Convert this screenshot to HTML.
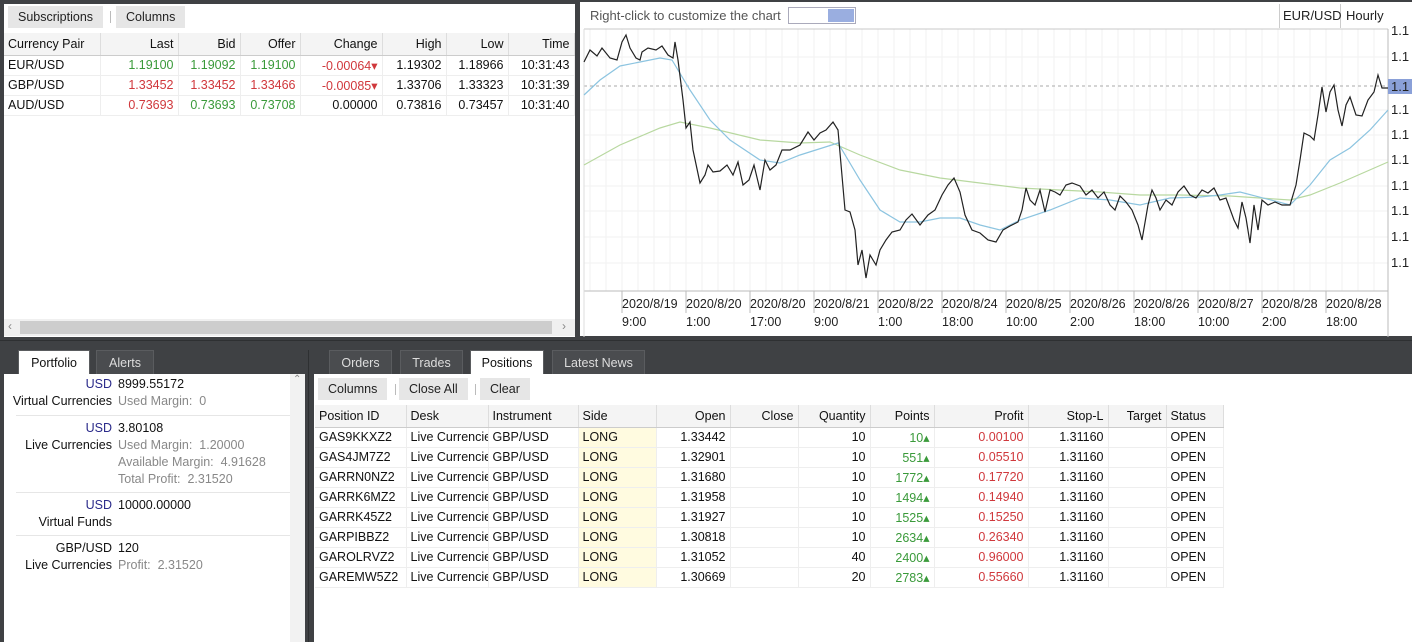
<!DOCTYPE html>
<html><head><meta charset="utf-8"><style>
*{margin:0;padding:0;box-sizing:border-box}
body{width:1412px;height:642px;background:#3f4144;font-family:"Liberation Sans","Noto Sans CJK SC",sans-serif;font-size:12.5px;color:#111;position:relative;overflow:hidden}
.a{position:absolute}
.btn{position:absolute;background:#e6e6e6;height:22px;line-height:22px;padding:0 10px;color:#222}
.tab{position:absolute;height:24px;line-height:24px;text-align:center;background:#4a4c4f;color:#ddd;border:1px solid #5a5c5f;border-bottom:none}
.tab.on{background:#fff;color:#111}
table{border-collapse:collapse;position:absolute;table-layout:fixed}
td{height:20px;padding:0 4px;white-space:nowrap;overflow:hidden;border-right:1px solid #eee;border-bottom:1px solid #eee}
th{height:22px;font-weight:normal;padding:0 4px;background:#f4f4f4;border-right:1px solid #ddd;border-bottom:1px solid #ccc;white-space:nowrap;overflow:hidden}
.r{text-align:right}.l{text-align:left}
.g{color:#3a9a3a}.rd{color:#d0383c}.gy{color:#888}.bl{color:#2a2a8a}
.side{background:#fffbe0}
.pl{position:absolute;right:178px;width:200px;text-align:right}
.pv{position:absolute;left:114px}
.pb{position:absolute;left:0;width:286px;line-height:17px}
.sep{position:absolute;left:12px;width:274px;height:1px;background:#e6e6e6}
</style></head><body>
<div class="a" style="left:4px;top:4px;width:571px;height:333px;background:#fff"></div>
<div class="btn" style="left:8px;top:6px">Subscriptions</div>
<div class="a" style="left:110px;top:11px;width:1px;height:12px;background:#bbb"></div>
<div class="btn" style="left:116px;top:6px">Columns</div>
<table style="left:4px;top:33px;width:570px">
<colgroup><col style="width:96px"><col style="width:78px"><col style="width:62px"><col style="width:60px"><col style="width:82px"><col style="width:64px"><col style="width:62px"><col style="width:66px"></colgroup>
<tr><th class="l">Currency Pair</th><th class="r">Last</th><th class="r">Bid</th><th class="r">Offer</th><th class="r">Change</th><th class="r">High</th><th class="r">Low</th><th class="r">Time</th></tr>
<tr><td>EUR/USD</td><td class="r g">1.19100</td><td class="r g">1.19092</td><td class="r g">1.19100</td><td class="r rd">-0.00064▾</td><td class="r">1.19302</td><td class="r">1.18966</td><td class="r">10:31:43</td></tr>
<tr><td>GBP/USD</td><td class="r rd">1.33452</td><td class="r rd">1.33452</td><td class="r rd">1.33466</td><td class="r rd">-0.00085▾</td><td class="r">1.33706</td><td class="r">1.33323</td><td class="r">10:31:39</td></tr>
<tr><td>AUD/USD</td><td class="r rd">0.73693</td><td class="r g">0.73693</td><td class="r g">0.73708</td><td class="r">0.00000</td><td class="r">0.73816</td><td class="r">0.73457</td><td class="r">10:31:40</td></tr>
</table>
<div class="a" style="left:4px;top:319px;width:571px;height:17px;background:#f0f0f0"></div>
<div class="a" style="left:20px;top:321px;width:532px;height:13px;background:#cdcdcd"></div>
<div class="a gy" style="left:8px;top:319px;font-size:12px">‹</div>
<div class="a gy" style="left:562px;top:319px;font-size:12px">›</div>
<div class="a" style="left:580px;top:2px;width:832px;height:334px;background:#fff"></div>
<div class="a" style="left:590px;top:8px;color:#555;font-size:13px">Right-click to customize the chart</div>
<div class="a" style="left:788px;top:7px;width:68px;height:17px;border:1px solid #aab"></div>
<div class="a" style="left:828px;top:9px;width:26px;height:13px;background:#9aaee0"></div>
<div class="a" style="left:1279px;top:4px;width:1px;height:24px;background:#ccc"></div>
<div class="a" style="left:1340px;top:4px;width:1px;height:24px;background:#ccc"></div>
<div class="a" style="left:1283px;top:8px;font-size:13px;color:#222">EUR/USD</div>
<div class="a" style="left:1346px;top:8px;font-size:13px;color:#222">Hourly</div>
<svg class="a" style="left:580px;top:0" width="832" height="337">
<g stroke="#f2f2f2" stroke-width="1">
<path d="M10 29V291M26 29V291M42 29V291M58 29V291M74 29V291M90 29V291M106 29V291M122 29V291M138 29V291M154 29V291M170 29V291M186 29V291M202 29V291M218 29V291M234 29V291M250 29V291M266 29V291M282 29V291M298 29V291M314 29V291M330 29V291M346 29V291M362 29V291M378 29V291M394 29V291M410 29V291M426 29V291M442 29V291M458 29V291M474 29V291M490 29V291M506 29V291M522 29V291M538 29V291M554 29V291M570 29V291M586 29V291M602 29V291M618 29V291M634 29V291M650 29V291M666 29V291M682 29V291M698 29V291M714 29V291M730 29V291M746 29V291M762 29V291M778 29V291M794 29V291"/>
<path d="M4 57H808M4 110H808M4 135H808M4 160H808M4 186H808M4 211H808M4 237H808M4 263H808"/>
</g>
<line x1="4" y1="29" x2="808" y2="29" stroke="#c8c8c8"/>
<line x1="4" y1="86" x2="808" y2="86" stroke="#aaa" stroke-dasharray="3,3"/>
<line x1="4" y1="291" x2="808" y2="291" stroke="#bbb"/>
<line x1="808" y1="29" x2="808" y2="337" stroke="#bbb"/>
<line x1="4" y1="29" x2="4" y2="337" stroke="#ddd"/>
<g stroke="#bbb"><path d="M42 291v22M106 291v22M170 291v22M234 291v22M298 291v22M362 291v22M426 291v22M490 291v22M554 291v22M618 291v22M682 291v22M746 291v22"/></g>
<polyline fill="none" stroke="#b8d8a0" stroke-width="1.2" points="4,165 40,145 80,128 100,122 130,128 180,140 220,143 250,142 280,155 320,170 360,178 400,183 440,188 480,190 520,192 560,195 600,195 650,196 710,200 730,195 760,183 808,162"/>
<polyline fill="none" stroke="#8cc4e0" stroke-width="1.2" points="4,95 20,80 40,66 60,62 80,58 92,60 110,90 130,120 150,140 180,160 200,163 220,155 258,143 280,180 300,210 320,222 340,222 360,218 380,218 400,225 420,230 440,220 470,210 500,198 530,200 560,205 590,198 620,197 640,195 660,192 710,205 730,185 750,160 770,148 790,130 808,110"/>
<polyline fill="none" stroke="#222" stroke-width="1.2" points="4,62 10,50 17,56 22,48 30,58 37,60 42,42 46,35 50,48 56,58 60,60 62,52 68,48 76,50 82,46 88,55 93,58 95,42 98,60 103,100 106,128 110,122 113,150 120,183 125,175 128,165 133,172 140,171 147,165 153,175 158,162 163,185 169,180 174,165 180,190 185,160 190,170 196,165 202,150 210,150 220,145 228,132 234,140 240,133 246,130 253,122 258,130 265,210 270,212 275,230 278,265 282,250 286,278 290,255 296,265 300,250 306,240 312,232 320,230 326,220 332,214 340,225 348,215 355,210 362,195 368,185 374,178 380,192 385,215 392,230 400,233 408,240 416,242 423,230 430,226 438,222 442,210 446,188 450,200 455,205 460,190 465,212 470,190 475,192 480,195 486,185 492,183 500,186 506,195 512,190 518,198 524,192 530,205 535,210 540,196 546,202 552,210 558,225 562,240 568,205 572,190 576,198 580,210 586,200 592,205 598,192 604,186 610,195 616,198 622,190 628,193 634,188 640,200 646,198 654,220 658,228 662,202 666,218 670,243 674,205 678,230 682,200 688,205 695,202 702,205 710,205 716,185 720,160 724,133 730,136 734,140 738,115 742,87 746,112 750,92 754,85 758,110 762,126 766,105 770,97 776,115 782,116 788,100 794,92 798,75 802,88 808,88"/>
<rect x="808" y="79" width="24" height="15" fill="#8aa0d8"/>
<g font-family="Liberation Sans,sans-serif" font-size="13" fill="#222">
<text x="811" y="35">1.1</text><text x="811" y="61">1.1</text><text x="811" y="91">1.1</text><text x="811" y="114">1.1</text><text x="811" y="139">1.1</text><text x="811" y="164">1.1</text><text x="811" y="190">1.1</text><text x="811" y="215">1.1</text><text x="811" y="241">1.1</text><text x="811" y="267">1.1</text>
</g>
<g font-family="Liberation Sans,sans-serif" font-size="12.5" fill="#222">
<text x="42" y="308">2020/8/19</text><text x="106" y="308">2020/8/20</text><text x="170" y="308">2020/8/20</text><text x="234" y="308">2020/8/21</text><text x="298" y="308">2020/8/22</text><text x="362" y="308">2020/8/24</text><text x="426" y="308">2020/8/25</text><text x="490" y="308">2020/8/26</text><text x="554" y="308">2020/8/26</text><text x="618" y="308">2020/8/27</text><text x="682" y="308">2020/8/28</text><text x="746" y="308">2020/8/28</text>
<text x="42" y="326">9:00</text><text x="106" y="326">1:00</text><text x="170" y="326">17:00</text><text x="234" y="326">9:00</text><text x="298" y="326">1:00</text><text x="362" y="326">18:00</text><text x="426" y="326">10:00</text><text x="490" y="326">2:00</text><text x="554" y="326">18:00</text><text x="618" y="326">10:00</text><text x="682" y="326">2:00</text><text x="746" y="326">18:00</text>
</g>
</svg>
<div class="a" style="left:0;top:340px;width:1412px;height:1px;background:#2e3032"></div>
<div class="tab on" style="left:18px;top:350px;width:72px">Portfolio</div>
<div class="tab" style="left:96px;top:350px;width:58px">Alerts</div>
<div class="a" style="left:4px;top:374px;width:286px;height:268px;background:#fff"></div>
<div class="a" style="left:290px;top:374px;width:15px;height:268px;background:#f2f2f2"></div>
<div class="a gy" style="left:293px;top:374px;font-size:10px">⌃</div>
<div class="a" style="left:308px;top:350px;width:1px;height:292px;background:#2e3032"></div>
<div class="a" style="left:4px;top:0;width:286px;height:642px;font-size:12.5px">
<div class="pb" style="top:376px"><div class="pl"><span class="bl">USD</span><br>Virtual Currencies</div><div class="pv">8999.55172<br><span class="gy">Used Margin:&nbsp; 0</span></div></div>
<div class="sep" style="top:415px"></div>
<div class="pb" style="top:420px"><div class="pl"><span class="bl">USD</span><br>Live Currencies</div><div class="pv">3.80108<br><span class="gy">Used Margin:&nbsp; 1.20000<br>Available Margin:&nbsp; 4.91628<br>Total Profit:&nbsp; 2.31520</span></div></div>
<div class="sep" style="top:492px"></div>
<div class="pb" style="top:497px"><div class="pl"><span class="bl">USD</span><br>Virtual Funds</div><div class="pv">10000.00000</div></div>
<div class="sep" style="top:535px"></div>
<div class="pb" style="top:540px"><div class="pl">GBP/USD<br>Live Currencies</div><div class="pv">120<br><span class="gy">Profit:&nbsp; 2.31520</span></div></div>
</div>
<div class="tab" style="left:329px;top:350px;width:63px">Orders</div>
<div class="tab" style="left:400px;top:350px;width:63px">Trades</div>
<div class="tab on" style="left:470px;top:350px;width:74px">Positions</div>
<div class="tab" style="left:552px;top:350px;width:93px">Latest News</div>
<div class="a" style="left:314px;top:374px;width:1098px;height:268px;background:#fff"></div>
<div class="btn" style="left:318px;top:378px">Columns</div>
<div class="a" style="left:395px;top:384px;width:1px;height:11px;background:#bbb"></div>
<div class="btn" style="left:399px;top:378px">Close All</div>
<div class="a" style="left:475px;top:384px;width:1px;height:11px;background:#bbb"></div>
<div class="btn" style="left:480px;top:378px">Clear</div>
<table style="left:315px;top:405px;width:908px">
<colgroup><col style="width:91px"><col style="width:82px"><col style="width:90px"><col style="width:78px"><col style="width:74px"><col style="width:68px"><col style="width:72px"><col style="width:64px"><col style="width:94px"><col style="width:80px"><col style="width:58px"><col style="width:57px"></colgroup>
<tr><th class="l">Position ID</th><th class="l">Desk</th><th class="l">Instrument</th><th class="l">Side</th><th class="r">Open</th><th class="r">Close</th><th class="r">Quantity</th><th class="r">Points</th><th class="r">Profit</th><th class="r">Stop-L</th><th class="r">Target</th><th class="l">Status</th></tr>
<tr><td>GAS9KKXZ2</td><td>Live Currencies</td><td>GBP/USD</td><td class="side">LONG</td><td class="r">1.33442</td><td></td><td class="r">10</td><td class="r g">10▴</td><td class="r rd">0.00100</td><td class="r">1.31160</td><td></td><td>OPEN</td></tr>
<tr><td>GAS4JM7Z2</td><td>Live Currencies</td><td>GBP/USD</td><td class="side">LONG</td><td class="r">1.32901</td><td></td><td class="r">10</td><td class="r g">551▴</td><td class="r rd">0.05510</td><td class="r">1.31160</td><td></td><td>OPEN</td></tr>
<tr><td>GARRN0NZ2</td><td>Live Currencies</td><td>GBP/USD</td><td class="side">LONG</td><td class="r">1.31680</td><td></td><td class="r">10</td><td class="r g">1772▴</td><td class="r rd">0.17720</td><td class="r">1.31160</td><td></td><td>OPEN</td></tr>
<tr><td>GARRK6MZ2</td><td>Live Currencies</td><td>GBP/USD</td><td class="side">LONG</td><td class="r">1.31958</td><td></td><td class="r">10</td><td class="r g">1494▴</td><td class="r rd">0.14940</td><td class="r">1.31160</td><td></td><td>OPEN</td></tr>
<tr><td>GARRK45Z2</td><td>Live Currencies</td><td>GBP/USD</td><td class="side">LONG</td><td class="r">1.31927</td><td></td><td class="r">10</td><td class="r g">1525▴</td><td class="r rd">0.15250</td><td class="r">1.31160</td><td></td><td>OPEN</td></tr>
<tr><td>GARPIBBZ2</td><td>Live Currencies</td><td>GBP/USD</td><td class="side">LONG</td><td class="r">1.30818</td><td></td><td class="r">10</td><td class="r g">2634▴</td><td class="r rd">0.26340</td><td class="r">1.31160</td><td></td><td>OPEN</td></tr>
<tr><td>GAROLRVZ2</td><td>Live Currencies</td><td>GBP/USD</td><td class="side">LONG</td><td class="r">1.31052</td><td></td><td class="r">40</td><td class="r g">2400▴</td><td class="r rd">0.96000</td><td class="r">1.31160</td><td></td><td>OPEN</td></tr>
<tr><td>GAREMW5Z2</td><td>Live Currencies</td><td>GBP/USD</td><td class="side">LONG</td><td class="r">1.30669</td><td></td><td class="r">20</td><td class="r g">2783▴</td><td class="r rd">0.55660</td><td class="r">1.31160</td><td></td><td>OPEN</td></tr>
</table>
</body></html>
